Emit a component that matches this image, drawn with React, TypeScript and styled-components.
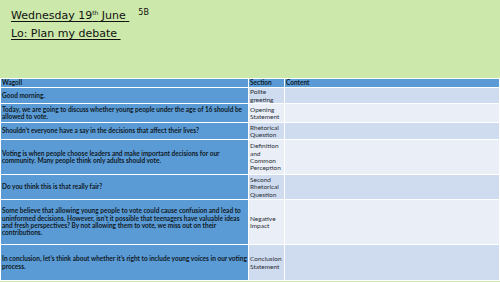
import React from 'react';
import styled, { createGlobalStyle } from 'styled-components';

const GlobalStyle = createGlobalStyle`
	html, body {
		margin: 0;
		padding: 0;
		background: #cce8aa;
	}
	body {
		font-family: 'DejaVu Sans', sans-serif;
	}
`;

interface Row {
	text: string;
	section: string[];
	height: number;
}

const rows: Row[] = [
	{ text: 'Good morning.', section: ['Polite', 'greeting'], height: 15 },
	{
		text: 'Today, we are going to discuss whether young people under the age of 16 should be allowed to vote.',
		section: ['Opening', 'Statement'],
		height: 18,
	},
	{
		text: 'Shouldn\u2019t everyone have a say in the decisions that affect their lives?',
		section: ['Rhetorical', 'Question'],
		height: 16,
	},
	{
		text: 'Voting is when people choose leaders and make important decisions for our community. Many people think only adults should vote.',
		section: ['Definition', 'and', 'Common', 'Perception'],
		height: 34,
	},
	{
		text: 'Do you think this is that really fair?',
		section: ['Second', 'Rhetorical', 'Question'],
		height: 24,
	},
	{
		text: 'Some believe that allowing young people to vote could cause confusion and lead to uninformed decisions. However, isn\u2019t it possible that teenagers have valuable ideas and fresh perspectives? By not allowing them to vote, we miss out on their contributions.',
		section: ['Negative', 'Impact'],
		height: 44,
	},
	{
		text: 'In conclusion, let\u2019s think about whether it\u2019s right to include young voices in our voting process.',
		section: ['Conclusion', 'Statement'],
		height: 35,
	},
];

const App: React.FC = () => {
	return (
		<Page>
			<GlobalStyle />
			<Banner>
				<TitleLine>
					<Title>
						Wednesday 19<Sup>th</Sup> June{' '}
					</Title>
					<ClassTag>5B</ClassTag>
				</TitleLine>
				<Title>Lo: Plan my debate </Title>
			</Banner>
			<Table heights={rows.map((r) => r.height)}>
				<HeadCell>Wagoll</HeadCell>
				<HeadCell>Section</HeadCell>
				<HeadCell>Content</HeadCell>
				{rows.map((row, i) => (
					<React.Fragment key={i}>
						<TextCell>{row.text}</TextCell>
						<SectionCell $band={i % 2 === 0}>
							<span>
								{row.section.map((s, j) => (
									<React.Fragment key={j}>
										{j > 0 && <br />}
										{s}
									</React.Fragment>
								))}
							</span>
						</SectionCell>
						<ContentCell $band={i % 2 === 0} />
					</React.Fragment>
				))}
			</Table>
		</Page>
	);
};

export default App;

const Page = styled.div`
	width: 500px;
	height: 282px;
	overflow: hidden;
	background: #cce8aa;
`;

const Banner = styled.div`
	height: 78px;
	box-sizing: border-box;
	padding: 7px 0 0 11px;
	display: flex;
	flex-direction: column;
	gap: 1px;
`;

const TitleLine = styled.div`
	display: flex;
	align-items: flex-start;
`;

const Title = styled.div`
	font-family: 'DejaVu Sans', sans-serif;
	font-size: 11px;
	line-height: 17px;
	color: #111;
	text-decoration: underline;
	text-underline-offset: 2px;
	white-space: pre;
`;

const Sup = styled.span`
	font-size: 6px;
	vertical-align: 4px;
	line-height: 0;
`;

const ClassTag = styled.span`
	font-family: 'DejaVu Sans', sans-serif;
	font-size: 8px;
	line-height: 10px;
	color: #111;
	margin-left: 9px;
	margin-top: 1px;
`;

const Table = styled.div<{ heights: number[] }>`
	display: grid;
	grid-template-columns: 247px 35px 214px;
	grid-template-rows: 8px ${(p) => p.heights.map((h) => `${h}px`).join(' ')};
	gap: 1px;
	padding: 1px;
	background: #ffffff;
	font-family: Lato, 'Open Sans', sans-serif;
	font-size: 6.5px;
	line-height: 7.3px;
`;

const HeadCell = styled.div`
	background: #5b9bd5;
	color: #0f1a26;
	font-weight: 700;
	padding: 0 1px;
	line-height: 8px;
	overflow: hidden;
`;

const TextCell = styled.div`
	background: #5b9bd5;
	color: #0f1a26;
	font-weight: 700;
	padding: 0 1px;
	display: flex;
	align-items: center;
	overflow: hidden;
`;

const SectionCell = styled.div<{ $band: boolean }>`
	background: ${(p) => (p.$band ? '#cfdbee' : '#e9eef7')};
	color: #2a2f36;
	padding: 0 1px;
	display: flex;
	align-items: center;
	overflow: hidden;
`;

const ContentCell = styled.div<{ $band: boolean }>`
	background: ${(p) => (p.$band ? '#cfdbee' : '#e9eef7')};
`;
